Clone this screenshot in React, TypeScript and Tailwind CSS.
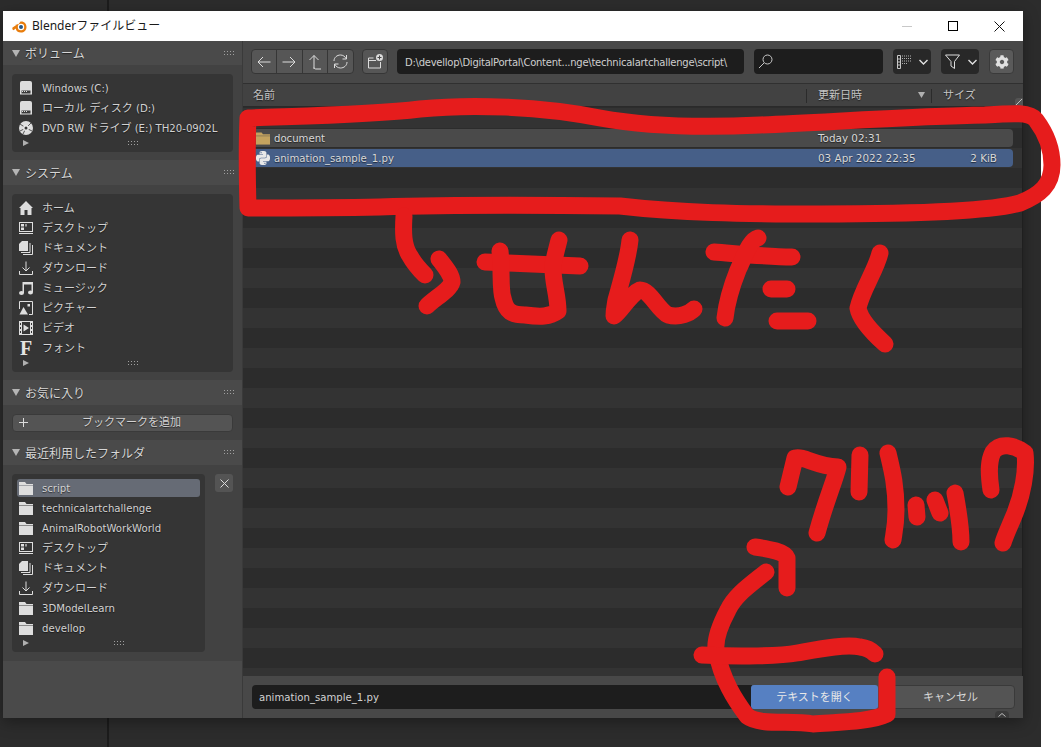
import React from "react";
import { FaCog } from "react-icons/fa";
import { SiPython } from "react-icons/si";

const FONT = "font-['DejaVu_Sans','Noto_Sans_CJK_JP',sans-serif]";
const SHADOW = "[text-shadow:0_1px_1px_rgba(0,0,0,0.55)]";
const C = "#dedede";

const Jp = ({ children }: { children: React.ReactNode }) => <span className="text-[11px]">{children}</span>;

const Disk = () => (
  <svg width="14" height="16" viewBox="0 0 14 16">
    <path d="M3 1h8a2 2 0 0 1 2 2v11H1V3a2 2 0 0 1 2-2z" fill={C} />
    <rect x="1" y="9.5" width="12" height="5" fill={C} />
    <rect x="2.5" y="10.5" width="9" height="3" fill="#3a3a3a" />
    <path d="M3 11.5h1M5 11.5h1M7 11.5h1" stroke={C} strokeWidth="1" />
  </svg>
);
const Cd = () => (
  <svg width="14" height="14" viewBox="0 0 14 14">
    <circle cx="7" cy="7" r="7" fill={C} />
    <path d="M7 7L1 3M7 7L1 10M7 7L4 13M7 7L13 10M7 7L12 2" stroke="#555" strokeWidth="1" />
    <circle cx="7" cy="7" r="3" fill="#e8e8e8" />
    <circle cx="7" cy="7" r="1.5" fill="#363636" />
  </svg>
);
const Home = () => (
  <svg width="14" height="14" viewBox="0 0 14 14">
    <path d="M7 0L14 7L12.5 7V14H8.5V9H5.5V14H1.5V7H0z" fill={C} />
  </svg>
);
const Desktop = () => (
  <svg width="14" height="14" viewBox="0 0 14 14" fill="none">
    <rect x="0.5" y="1.5" width="13" height="9" stroke={C} />
    <rect x="2" y="3" width="3" height="2.5" fill={C} />
    <rect x="6" y="3" width="2" height="2.5" fill="#999" />
    <rect x="2" y="6.5" width="3" height="2.5" fill={C} />
    <path d="M0 12.5h14" stroke={C} />
  </svg>
);
const Docs = () => (
  <svg width="14" height="14" viewBox="0 0 14 14" fill="none">
    <path d="M3 0h6v10H0V3z" fill={C} />
    <path d="M11 2v9.5H2M13.5 4v9.5H4" stroke={C} />
  </svg>
);
const Download = () => (
  <svg width="14" height="14" viewBox="0 0 14 14" fill="none" stroke={C}>
    <path d="M7 0.5V10M3.5 6.5L7 10L10.5 6.5M0.5 10v3.5h13V10" />
  </svg>
);
const Music = () => (
  <svg width="14" height="14" viewBox="0 0 14 14">
    <path d="M3.5 1H14V11h-1.5V3.5H5V12H3.5z" fill={C} />
    <ellipse cx="2.5" cy="12" rx="2.5" ry="2" fill={C} />
    <ellipse cx="11.5" cy="11.5" rx="2.5" ry="2" fill={C} />
  </svg>
);
const Picture = () => (
  <svg width="14" height="14" viewBox="0 0 14 14" fill="none">
    <path d="M0.5 8V0.5H13.5V13.5H10" stroke={C} />
    <path d="M0.5 13.5L4.5 6L9 13.5z" fill={C} />
    <rect x="8.5" y="3" width="2.5" height="2.5" fill={C} />
  </svg>
);
const Video = () => (
  <svg width="14" height="14" viewBox="0 0 14 14">
    <path fillRule="evenodd" d="M0 0H14V14H0zM3 1v12h8V1zM1 2v2h1V2zM1 6v2h1V6zM1 10v2h1v-2zM12 2v2h1V2zM12 6v2h1V6zM12 10v2h1v-2z" fill={C} />
    <path d="M4.5 3.5L10 7L4.5 10.5z" fill={C} />
  </svg>
);
const Font = () => (
  <span className="block w-[14px] text-center font-['Liberation_Serif',serif] font-bold text-[20px] leading-[14px] text-[#e4e4e4]">F</span>
);
const Folder = () => (
  <svg width="14" height="14" viewBox="0 0 14 14">
    <path d="M0 1h6l1.5 2H14v1.5H0z" fill={C} />
    <rect x="0" y="5" width="14" height="9" fill={C} />
  </svg>
);

const Grip = () => (
  <svg width="10" height="5" viewBox="0 0 10 5" fill="#a0a0a0" className="shrink-0">
    {[0, 3, 6, 9].map((x) => (
      <React.Fragment key={x}>
        <rect x={x} y="0" width="1" height="1" />
        <rect x={x} y="3" width="1" height="1" />
      </React.Fragment>
    ))}
  </svg>
);

const Header = ({ title, h = "h-[25px]" }: { title: string; h?: string }) => (
  <div className={`${h} bg-[#4a4a4a] flex items-center pl-[9px] pr-[8px] shrink-0`}>
    <svg width="8" height="7" viewBox="0 0 8 7" className="mr-[5px]">
      <path d="M0 0H8L4 7z" fill="#b5b5b5" />
    </svg>
    <span className={`text-[12px] text-[#d6d6d6] flex-1 translate-y-px ${SHADOW}`}>{title}</span>
    <Grip />
  </div>
);

const Row = ({ icon, children, selected }: { icon: React.ReactNode; children: React.ReactNode; selected?: boolean }) => (
  <div className="h-5 flex items-center">
    <div className={`h-[18px] flex-1 flex items-center pl-[2px] rounded-[3px] ${selected ? "bg-[#666b75]" : ""}`}>
      <div className="w-[14px] h-4 flex items-center justify-center shrink-0">{icon}</div>
      <span className={`ml-[9px] text-[10.15px] whitespace-nowrap text-[#d2d2d2] translate-y-px ${SHADOW}`}>{children}</span>
    </div>
  </div>
);

const BoxFooter = () => (
  <div className="h-[14px] relative flex items-center justify-center pb-[4px] pl-[20px]">
    <svg width="6" height="6" viewBox="0 0 6 6" className="absolute left-[6px] top-[2px]">
      <path d="M0 0L6 3L0 6z" fill="#b0b0b0" />
    </svg>
    <Grip />
  </div>
);

const Box = ({ children, className = "" }: { children: React.ReactNode; className?: string }) => (
  <div className={`bg-[#353535] rounded-[4px] pt-1 px-[5px] ${className}`}>
    {children}
    <BoxFooter />
  </div>
);

const Stroke = ({ d }: { d: string }) => <path d={d} />;

const Scribbles = () => (
  <svg width="1063" height="747" viewBox="0 0 1063 747" fill="none" stroke="#e61c1c" strokeWidth="17" strokeLinecap="round" strokeLinejoin="round" className="absolute left-0 top-0 pointer-events-none">
    <Stroke d="M248 208C247 170 247 140 248 118C300 116 370 115 420 109C470 104 540 106 600 118C650 127 700 128 760 125C830 122 920 116 985 115C1015 113 1030 112 1036 120C1048 136 1052 150 1052 165C1052 185 1040 195 1020 203C990 212 900 214 820 214C740 214 680 213 620 206C540 205 440 205 380 207C330 208 290 208 248 208z" />
    <Stroke d="M404 216C403 232 403 246 410 256C415 265 420 270 425 275" />
    <Stroke d="M439 259C446 268 452 275 452 282C450 290 435 298 427 306" />
    <Stroke d="M485 262L580 266" />
    <Stroke d="M500 251C502 270 500 290 503 298C506 312 512 315 525 315C540 317 550 317 558 311C558 295 552 280 553 265C555 255 557 248 559 240" />
    <Stroke d="M630 240C628 260 620 285 616 300C615 306 614 310 614 316C622 310 630 294 640 290C650 290 658 310 668 315C680 318 690 313 694 309" />
    <Stroke d="M714 252C740 254 770 257 792 257" />
    <Stroke d="M758 238C750 240 745 255 738 270C732 285 727 300 725 318" />
    <Stroke d="M771 289L787 289" />
    <Stroke d="M777 321L808 321" />
    <Stroke d="M880 253C876 270 862 290 858 308C860 320 875 335 885 344" />
    <Stroke d="M788 487L795 458C805 456 815 466 838 467C835 480 826 500 817 533" />
    <Stroke d="M860 455L859 492" />
    <Stroke d="M888 453C892 470 896 485 896 510C896 525 894 533 893 540" />
    <Stroke d="M916 505L917 517" />
    <Stroke d="M935 500L940 513" />
    <Stroke d="M955 493C958 510 961 525 961 542" />
    <Stroke d="M991 490C988 470 989 460 993 452C1000 442 1015 445 1025 453C1027 470 1023 495 1013 518C1008 530 1005 536 1003 543" />
    <Stroke d="M755 547C770 549 785 552 787 558L787 588" />
    <Stroke d="M766 572C750 585 735 595 728 610C720 625 715 640 716 650C722 680 735 700 747 716C760 726 790 720 813 724C840 722 870 722 887 714L887 677" />
    <Stroke d="M702 655C740 657 780 656 797 653C820 649 845 644 860 647C868 648 873 652 875 654" />
  </svg>
);

const NavBtn = ({ children, last }: { children: React.ReactNode; last?: boolean }) => (
  <div className={`w-[26px] h-full flex items-center justify-center ${last ? "" : "border-r border-[#363636]"}`}>{children}</div>
);

const ic = { stroke: "#dcdcdc", strokeWidth: 1, fill: "none" };

const Chevron = () => (
  <svg width="9" height="6" viewBox="0 0 9 6" fill="none" stroke="#e0e0e0" strokeWidth={1.4}><path d="M0.5 1L4.5 5L8.5 1" /></svg>
);

const Toolbar = () => (
  <div className="h-[43px] bg-[#484848] border-b border-[#303030] flex items-start pt-[8px] pl-[8px] shrink-0">
    <div className="flex h-[25px] w-[103px] bg-[#565656] rounded-[4px] border border-[#363636] overflow-hidden">
      <NavBtn>
        <svg width="14" height="12" viewBox="0 0 14 12" {...ic}><path d="M13.5 6H1M6 1L1 6L6 11" /></svg>
      </NavBtn>
      <NavBtn>
        <svg width="14" height="12" viewBox="0 0 14 12" {...ic}><path d="M0.5 6H13M8 1L13 6L8 11" /></svg>
      </NavBtn>
      <NavBtn>
        <svg width="14" height="16" viewBox="0 0 14 16" {...ic}><path d="M6 15V1.5M1.5 6L6 1.5L10.5 6M6 13.5C6 14.5 7 15 8 15H13" /></svg>
      </NavBtn>
      <NavBtn last>
        <svg width="15" height="15" viewBox="0 0 15 15" {...ic}><path d="M1 7C1 3.5 4 1 7.5 1C10 1 12 2.5 13.5 5M13.5 1V5H9.5M14 8C14 11.5 11 14 7.5 14C5 14 3 12.5 1.5 10M1.5 14V10H5.5" /></svg>
      </NavBtn>
    </div>
    <div className="ml-[8px] w-[26px] h-[25px] bg-[#565656] rounded-[4px] border border-[#363636] flex items-center justify-center">
      <svg width="15" height="15" viewBox="0 0 15 15" fill="none">
        <path d="M0.5 4H5.5M0.5 4V14H12.5V8M0.5 6.5H8" stroke="#dcdcdc" />
        <circle cx="11.5" cy="3.5" r="3.5" fill="#dcdcdc" />
        <path d="M11.5 1.5v4M9.5 3.5h4" stroke="#484848" />
      </svg>
    </div>
    <div className="ml-[9px] w-[347px] h-[25px] bg-[#1d1d1d] rounded-[4px] flex items-center pl-[8px] pt-[2px] text-[10px] tracking-[-0.25px] text-[#cfcfcf] whitespace-nowrap">
      D:\devellop\DigitalPortal\Content...nge\technicalartchallenge\script\
    </div>
    <div className="ml-[10px] w-[129px] h-[25px] bg-[#1d1d1d] rounded-[4px] flex items-center pl-[4px]">
      <svg width="15" height="15" viewBox="0 0 15 15" {...ic} stroke="#c8c8c8"><circle cx="9.5" cy="5.5" r="4.5" /><path d="M6 9L1 14" /></svg>
    </div>
    <div className="ml-[10px] w-[38px] h-[25px] bg-[#282828] rounded-[4px] flex items-center pl-[4px] gap-[7px]">
      <svg width="15" height="14" viewBox="0 0 15 14" fill="none">
        <path d="M0.5 0.5H3.5V13.5H0.5zM0.5 4H3.5M0.5 7H3.5M0.5 10H3.5" stroke="#c8c8c8" />
        <path d="M5 1h10M5 3.5h10M5 6h10M5 8.5h5" stroke="#b0b0b0" strokeDasharray="1 1" />
      </svg>
      <Chevron />
    </div>
    <div className="ml-[10px] w-[38px] h-[25px] bg-[#282828] rounded-[4px] flex items-center pl-[4px] gap-[8px]">
      <svg width="15" height="15" viewBox="0 0 15 15" {...ic}><path d="M0.5 1H14.5L9.5 7.5V14.5L6 12V7.5z" /></svg>
      <Chevron />
    </div>
    <div className="ml-[10px] w-[25px] h-[25px] bg-[#5a5a5a] rounded-[4px] border border-[#3a3a3a] flex items-center justify-center">
      <FaCog size={14} color="#e0e0e0" />
    </div>
  </div>
);

const ColumnHeader = () => (
  <div className={`h-[23px] bg-[#424242] border-b border-[#2a2a2a] flex items-center pt-[2px] text-[10.4px] text-[#c4c4c4] shrink-0 relative ${SHADOW}`}>
    <div className="w-[563px] pl-[10px]"><Jp>名前</Jp></div>
    <div className="w-[125px] h-[14px] border-l border-[#2b2b2b] pl-[11px] flex items-center justify-between pr-[6px]">
      <Jp>更新日時</Jp>
      <svg width="7" height="6" viewBox="0 0 7 6" className="mt-[-3px]"><path d="M0 0H7L3.5 6z" fill="#b0b0b0" /></svg>
    </div>
    <div className="h-[14px] border-l border-[#2b2b2b] pl-[11px] flex items-center"><Jp>サイズ</Jp></div>
    <div className="absolute right-0 top-[14px] w-[8px] h-[8px] bg-[#545454] rounded-tl-[3px] flex items-center justify-center">
      <svg width="6" height="6" viewBox="0 0 6 6" stroke="#c0c0c0"><path d="M0 6L6 0" /></svg>
    </div>
  </div>
);

const FileRow = ({ icon, name, date, size, bg }: { icon?: React.ReactNode; name?: string; date: string; size?: string; bg: string }) => (
  <div className="h-5 flex items-center pl-[8px] pr-[9px]">
    <div className={`h-[18px] flex-1 rounded-[4px] flex items-center pt-[2px] text-[10.4px] text-[#d8d8d8] ${bg} ${SHADOW}`}>
      <div className="w-[14px] ml-[5px] flex justify-center shrink-0 mt-[-2px]">{icon}</div>
      <span className="ml-[4px] w-[544px] text-[10.15px]">{name}</span>
      <span className="w-[112px]">{date}</span>
      <span className="w-[67px] text-right whitespace-nowrap">{size}</span>
    </div>
  </div>
);

const stripes = Array.from({ length: 26 }, (_, i) => i);

const FileList = () => (
  <div className="flex-1 min-h-0 overflow-hidden border-r border-[#1f1f1f] pt-[1px] bg-[#2c2c2c]">
    <div className="bg-[#333333]">
      <FileRow date="Today 02:31" bg="" />
    </div>
    <FileRow
      bg="bg-[#4a4a4a]"
      icon={
        <svg width="15" height="13" viewBox="0 0 15 13">
          <path d="M0 0h6l1.5 2H15v1.5H0z" fill="#c4a35f" />
          <rect x="0" y="4" width="15" height="9" fill="#c4a35f" />
        </svg>
      }
      name="document"
      date="Today 02:31"
    />
    <div className="bg-[#333333]">
      <FileRow bg="bg-[#465f88]" icon={<SiPython size={14} color="#e8e8e8" />} name="animation_sample_1.py" date="03 Apr 2022 22:35" size="2 KiB" />
    </div>
    {stripes.map((i) => (
      <div key={i} className={`h-5 ${i % 2 === 0 ? "bg-[#2c2c2c]" : "bg-[#333333]"}`} />
    ))}
  </div>
);

const Sidebar = () => (
  <div className="w-[240px] flex flex-col bg-[#4a4a4a] shrink-0 border-r border-[#3a3a3a]">
    <Header title="ボリューム" h="h-[24px]" />
    <div className="bg-[#424242] pt-[9px] pb-[8px] px-[9px]">
      <Box>
        <Row icon={<Disk />}>Windows (C:)</Row>
        <Row icon={<Disk />}><Jp>ローカル ディスク</Jp> (D:)</Row>
        <Row icon={<Cd />}>DVD RW <Jp>ドライブ</Jp> (E:) TH20-0902L</Row>
      </Box>
    </div>
    <Header title="システム" />
    <div className="bg-[#424242] pt-[9px] pb-[8px] px-[9px]">
      <Box>
        <Row icon={<Home />}><Jp>ホーム</Jp></Row>
        <Row icon={<Desktop />}><Jp>デスクトップ</Jp></Row>
        <Row icon={<Docs />}><Jp>ドキュメント</Jp></Row>
        <Row icon={<Download />}><Jp>ダウンロード</Jp></Row>
        <Row icon={<Music />}><Jp>ミュージック</Jp></Row>
        <Row icon={<Picture />}><Jp>ピクチャー</Jp></Row>
        <Row icon={<Video />}><Jp>ビデオ</Jp></Row>
        <Row icon={<Font />}><Jp>フォント</Jp></Row>
      </Box>
    </div>
    <Header title="お気に入り" />
    <div className="bg-[#424242] pt-[9px] pb-[8px] px-[9px]">
      <div className="h-[18px] bg-[#545454] rounded-[4px] border border-[#3a3a3a] flex items-center relative justify-center pl-[18px] pt-[1px]">
        <svg width="9" height="9" viewBox="0 0 9 9" className="absolute left-[6px] top-[3px]" stroke="#dcdcdc"><path d="M4.5 0V9M0 4.5H9" /></svg>
        <span className={`text-[11px] text-[#d2d2d2] ${SHADOW}`}>ブックマークを追加</span>
      </div>
    </div>
    <Header title="最近利用したフォルダ" />
    <div className="bg-[#424242] pt-[9px] pb-[9px] px-[9px] flex gap-[10px] items-start">
      <Box className="w-[193px]">
        <Row selected icon={<Folder />}>script</Row>
        <Row icon={<Folder />}>technicalartchallenge</Row>
        <Row icon={<Folder />}>AnimalRobotWorkWorld</Row>
        <Row icon={<Desktop />}><Jp>デスクトップ</Jp></Row>
        <Row icon={<Docs />}><Jp>ドキュメント</Jp></Row>
        <Row icon={<Download />}><Jp>ダウンロード</Jp></Row>
        <Row icon={<Folder />}>3DModelLearn</Row>
        <Row icon={<Folder />}>devellop</Row>
      </Box>
      <div className="w-[18px] h-[18px] bg-[#545454] rounded-[3px] flex items-center justify-center">
        <svg width="9" height="9" viewBox="0 0 9 9" stroke="#dcdcdc"><path d="M0.5 0.5L8.5 8.5M8.5 0.5L0.5 8.5" /></svg>
      </div>
    </div>
  </div>
);

const Footer = () => (
  <div className="h-[42px] bg-[#484848] relative flex items-start pt-[9px] pl-[9px] shrink-0">
    <div className="w-[500px] h-6 bg-[#1d1d1d] rounded-l-[4px] flex items-center pl-[7px] pt-[2px] text-[10.15px] text-[#d2d2d2]">animation_sample_1.py</div>
    <div className="w-[127px] h-6 bg-[#5680c2] rounded-[3px] flex items-center justify-center pt-[2px] text-[11px] text-[#e8e8e8] ml-[-1px]">テキストを開く</div>
    <div className="ml-[8px] w-[129px] h-6 bg-[#545454] rounded-[4px] border border-[#3a3a3a] flex items-center justify-center pt-[2px] text-[11px] text-[#d8d8d8]">キャンセル</div>
    <div className="absolute right-[14px] bottom-0 w-[14px] h-[7px] bg-[#3a3a3a] rounded-t-[4px] flex items-center justify-center">
      <svg width="8" height="4" viewBox="0 0 8 4" fill="none" stroke="#bdbdbd"><path d="M0.5 3.5L4 0.5L7.5 3.5" /></svg>
    </div>
  </div>
);

const TitleBar = () => (
  <div className="h-[30px] bg-white flex items-center shrink-0 relative">
    <svg width="15" height="13" viewBox="0 0 15 13" className="ml-[9px]">
      <path d="M0.5 7.5L5 4.5L2.5 4.2H6.5L8.5 1.5C12 1 14.5 3.5 14.5 7C14.5 10.5 12 12.5 9 12.5C6 12.5 4 11 3.8 8.5L1.5 10.2C0.5 10 0 8.5 0.5 7.5z" fill="#e87d0d" />
      <circle cx="9" cy="7" r="3.2" fill="#fff" />
      <circle cx="9" cy="7" r="2" fill="#265787" />
    </svg>
    <span className="ml-[5px] text-[12px] text-[#1a1a1a] font-['Noto_Sans','Noto_Sans_CJK_JP',sans-serif]">Blenderファイルビュー</span>
    <div className="flex-1" />
    <div className="w-[46px] flex justify-center"><div className="w-[10px] h-px bg-[#c8c8c8]" /></div>
    <div className="w-[46px] flex justify-center"><div className="w-[10px] h-[10px] border border-black" /></div>
    <div className="w-[46px] flex justify-center mr-[1px]">
      <svg width="11" height="11" viewBox="0 0 11 11" stroke="#111"><path d="M0.5 0.5L10.5 10.5M10.5 0.5L0.5 10.5" /></svg>
    </div>
  </div>
);

export default function App() {
  return (
    <div className={`w-[1063px] h-[747px] bg-white relative overflow-hidden ${FONT}`}>
      <div className="w-[1041px] h-[747px] pl-[3px] pt-[11px] bg-[#2c2c2c] bg-[linear-gradient(90deg,transparent_107px,#1c1c1c_107px,#1c1c1c_109px,transparent_109px)]">
        <div className="w-[1020px] h-[707px] flex flex-col shadow-[0_4px_14px_rgba(0,0,0,0.35)]">
          <TitleBar />
          <div className="flex-1 flex min-h-0">
            <Sidebar />
            <div className="flex-1 min-w-0 flex flex-col">
              <Toolbar />
              <ColumnHeader />
              <FileList />
              <Footer />
            </div>
          </div>
        </div>
      </div>
      <Scribbles />
    </div>
  );
}
